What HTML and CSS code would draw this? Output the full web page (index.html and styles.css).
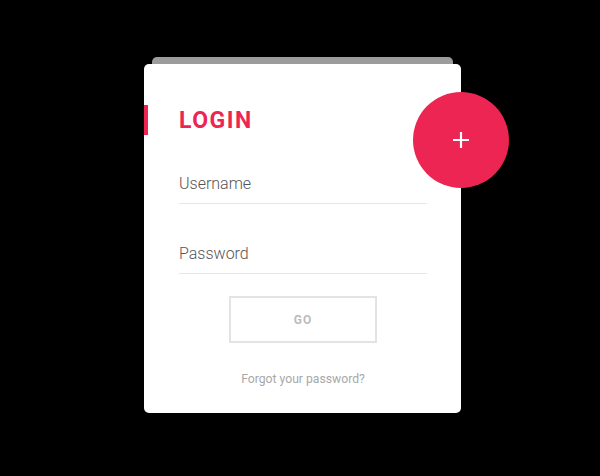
FILE: index.html
```html
<!DOCTYPE html>
<html>
<head>
<meta charset="utf-8">
<link rel="stylesheet" href="styles.css">
</head>
<body>
<div class="stage">
  <div class="back"></div>
  <div class="card">
    <h1 class="title">LOGIN</h1>
    <div class="field">Username</div>
    <div class="field field-gap">Password</div>
    <div class="actions">
      <button class="go">GO</button>
    </div>
    <div class="forgot">Forgot your password?</div>
    <div class="fab">
      <svg width="18" height="18" viewBox="0 0 18 18"><path d="M9 1v16M1 9h16" stroke="#fff" stroke-width="2.2" fill="none"/></svg>
    </div>
  </div>
</div>
</body>
</html>
```
FILE: styles.css
```css
html {
  background: #000;
}
body {
  margin: 0;
  padding: 0;
  width: 600px;
  height: 476px;
  overflow: hidden;
  font-family: Roboto, "Liberation Sans", sans-serif;
}
.stage {
  padding: 57px 0 0 144px;
}
.back {
  width: 301px;
  height: 7px;
  margin-left: 8px;
  background: #9c9c9c;
  border-radius: 5px 5px 0 0;
}
.card {
  position: relative;
  width: 317px;
  height: 349px;
  box-sizing: border-box;
  padding: 41px 34px 0 35px;
  background: #fff;
  border-radius: 5px;
}
.title {
  position: relative;
  margin: 0;
  height: 30px;
  line-height: 32px;
  font-size: 23px;
  font-weight: 700;
  letter-spacing: 1.5px;
  color: #ed2553;
}
.title::before {
  content: "";
  position: absolute;
  left: -35px;
  top: 0;
  width: 4px;
  height: 30px;
  background: #ed2553;
}
.field {
  margin-top: 39px;
  font-size: 16px;
  font-weight: 300;
  line-height: 20px;
  color: #555;
  padding-bottom: 9px;
  border-bottom: 1px solid #e6e6e6;
}
.field-gap {
  margin-top: 40px;
}
.actions {
  display: flex;
  justify-content: center;
  margin-top: 22px;
}
.go {
  width: 148px;
  height: 47px;
  background: #fff;
  border: 2px solid #e3e3e3;
  font-family: Roboto, "Liberation Sans", sans-serif;
  font-size: 12px;
  font-weight: 700;
  letter-spacing: 1px;
  color: #bcbcbc;
  padding: 0;
}
.forgot {
  margin-top: 29px;
  text-align: center;
  font-size: 12.2px;
  line-height: 14px;
  color: #a8a8a8;
}
.fab {
  position: absolute;
  left: 269px;
  top: 28px;
  width: 96px;
  height: 96px;
  border-radius: 50%;
  background: #ed2553;
  display: flex;
  align-items: center;
  justify-content: center;
}
```
